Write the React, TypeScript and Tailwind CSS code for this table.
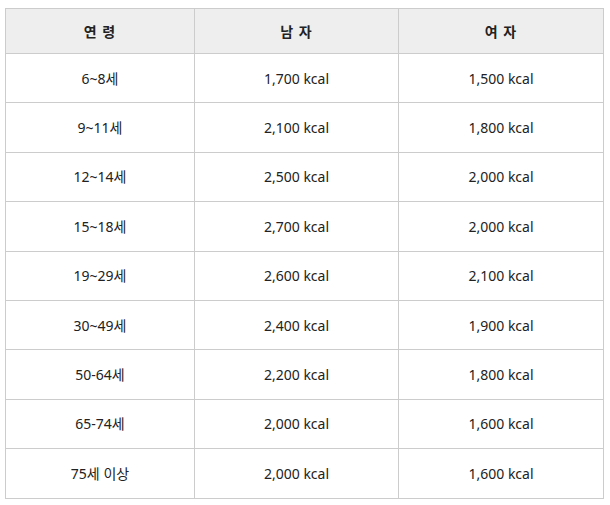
const rows = [
  ['6~8세', '1,700 kcal', '1,500 kcal'],
  ['9~11세', '2,100 kcal', '1,800 kcal'],
  ['12~14세', '2,500 kcal', '2,000 kcal'],
  ['15~18세', '2,700 kcal', '2,000 kcal'],
  ['19~29세', '2,600 kcal', '2,100 kcal'],
  ['30~49세', '2,400 kcal', '1,900 kcal'],
  ['50-64세', '2,200 kcal', '1,800 kcal'],
  ['65-74세', '2,000 kcal', '1,600 kcal'],
  ['75세 이상', '2,000 kcal', '1,600 kcal'],
];

export default function App() {
  return (
    <div
      className="bg-white pl-[5px] pt-[8px] pr-[6px] text-[#222] text-[14px]"
      style={{ fontFamily: '"Noto Sans", "Noto Sans CJK KR", sans-serif' }}
    >
      <table className="w-[599px] border-collapse table-fixed">
        <thead>
          <tr className="h-[45px] bg-[#eeeeee]">
            <th className="w-[189px] border border-[#cccccc] font-bold tracking-[1px]">연 령</th>
            <th className="w-[204px] border border-[#cccccc] font-bold tracking-[1px]">남 자</th>
            <th className="border border-[#cccccc] font-bold tracking-[1px]">여 자</th>
          </tr>
        </thead>
        <tbody>
          {rows.map((r) => (
            <tr key={r[0]} className="h-[49.4px]">
              {r.map((c, i) => (
                <td key={i} className="border border-[#cccccc] text-center">
                  {c}
                </td>
              ))}
            </tr>
          ))}
        </tbody>
      </table>
    </div>
  );
}
